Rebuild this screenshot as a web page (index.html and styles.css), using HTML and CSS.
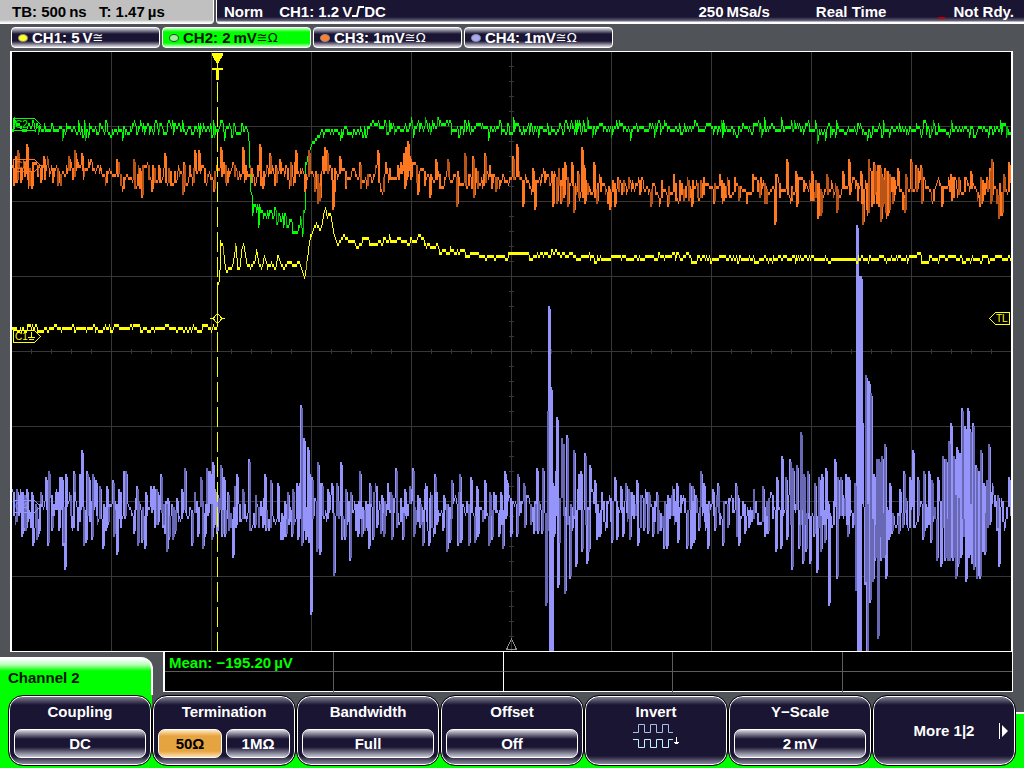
FILE: index.html
```html
<!DOCTYPE html>
<html lang="en">
<head>
  <meta charset="UTF-8">
  <meta name="viewport" content="width=device-width, initial-scale=1.0">
  <title>Oscilloscope</title>
  <link rel="stylesheet" href="styles.css">
</head>
<body>

  <!-- Status bar -->
  <header class="status">
    <div class="timebase">
      <span class="tb">TB: 500&#8201;ns</span>
      <span>T: 1.47&#8201;µs</span>
    </div>
    <div class="acquisition">
      <span class="mode">Norm</span>
      <span class="trigger">CH1: 1.2&#8201;V<svg class="edge" viewBox="0 0 12 11" width="12" height="11"><path d="M0 10h5l2-9h5" /></svg>DC</span>
      <span class="rate">250&#8201;MSa/s</span>
      <span class="sampling">Real Time</span>
      <span class="lamp"></span>
      <span>Not Rdy.</span>
    </div>
  </header>

  <!-- Channel buttons -->
  <nav class="channels">
    <button class="channel ch1"><span class="dot"></span>CH1: 5&#8201;V<span class="sym">≅</span></button>
    <button class="channel ch2 active"><span class="dot"></span>CH2: 2&#8201;mV<span class="sym">≅Ω</span></button>
    <button class="channel ch3"><span class="dot"></span>CH3: 1mV<span class="sym">≅Ω</span></button>
    <button class="channel ch4"><span class="dot"></span>CH4: 1mV<span class="sym">≅Ω</span></button>
  </nav>

  <!-- Waveforms -->
  <main class="screen">
    <svg class="plot" viewBox="12 52 999 599" preserveAspectRatio="none">
      <path id="grid" class="grid" />
      <path class="center" d="M511.500 639L506.500 649.500H516.500Z" />
      <g class="c2"><path id="wave2" /><path id="wave2dim" class="dim" /></g>
      <g class="c3"><path id="wave3" /><path id="wave3dim" class="dim" /></g>
      <g class="c4"><path id="wave4" /><path id="wave4dim" class="dim" /></g>
      <path class="trigger-line" d="M217.500 82V651" />
      <g class="c1"><path id="wave1" /><path id="wave1dim" class="dim" /></g>
      <g class="c1">
        <path d="M212 53h11v2l-5 9v4h5v2h-4v10h-3v-10h-4v-2h5v-4l-5-9z" />
        <path class="line" d="M210 318.500h3l4.500-5 4.500 5-4.500 5-4.500-5M222 318.500h3" />
        <path class="line" d="M1009.500 312.500V324.500H995.500L989.500 318.500L995.500 312.500Z" />
        <text x="996" y="322">TL</text>
        <path class="line" d="M13.500 330.500H34.500L40.500 336.500L34.500 342.500H13.500ZM31.500 332v5M28 337.500h7M29 339.500h5" />
        <text x="15" y="340">C1</text>
      </g>
      <g class="c2">
        <path class="line" d="M13.500 118.500H34.500L40.500 124.500L34.500 130.500H13.500Z" />
        <text x="15" y="128">C2</text>
      </g>
      <g class="c3">
        <path class="line" d="M13.500 159.500H34.500L40.500 165.500L34.500 171.500H13.500Z" />
        <text x="15" y="169">C3</text>
      </g>
      <g class="c4">
        <path class="line" d="M13.500 500.500H34.500L40.500 506.500L34.500 512.500H13.500Z" />
        <text x="15" y="510">C4</text>
      </g>
    </svg>
  </main>

  <!-- Measurement results -->
  <div class="results">
    <div class="tab">Channel 2</div>
    <div class="measure">
      <table>
        <tr><td colspan="1"><span class="reading">Mean: −195.20&#8201;µV</span></td><td></td><td></td><td></td><td></td></tr>
        <tr><td></td><td></td><td></td><td></td><td></td></tr>
      </table>
    </div>
  </div>

  <!-- Soft keys -->
  <footer class="menu">
    <div class="softkey">
      <span id="coupling">Coupling</span>
      <div class="values"><button class="value" aria-describedby="coupling">DC</button></div>
    </div>
    <div class="softkey">
      <span id="termination">Termination</span>
      <div class="values">
        <button class="value selected" aria-describedby="termination">50Ω</button>
        <button class="value" aria-describedby="termination">1MΩ</button>
      </div>
    </div>
    <div class="softkey">
      <span id="bandwidth">Bandwidth</span>
      <div class="values"><button class="value" aria-describedby="bandwidth">Full</button></div>
    </div>
    <div class="softkey">
      <span id="offset">Offset</span>
      <div class="values"><button class="value" aria-describedby="offset">Off</button></div>
    </div>
    <button class="softkey">
      <span>Invert</span>
      <svg class="invert" viewBox="0 0 48 26" width="48" height="26">
        <path stroke="#a8c0e8" d="M1 9.500H6.500V1.500H12.500V9.500H18.500V1.500H24.500V9.500H30.500V1.500H36.500V9.500H41" />
        <path stroke="#c0f4ff" d="M1 16.500H6.500V24.500H12.500V16.500H18.500V24.500H24.500V16.500H30.500V24.500H36.500V16.500H41" />
        <path stroke="#fff" d="M44.500 14V21M42 19.500h5M43 20.500h3" />
      </svg>
    </button>
    <div class="softkey">
      <span id="yscale">Y−Scale</span>
      <div class="values"><button class="value" aria-describedby="yscale">2&#8201;mV</button></div>
    </div>
    <button class="softkey more">
      <span>More 1|2</span>
      <svg class="next" viewBox="0 0 10 16" width="10" height="16"><path d="M0 0h1v16h-1zM3 2l6 6-6 6z" /></svg>
    </button>
  </footer>

  <script src="plot.js"></script>
</body>
</html>
```
FILE: styles.css
```css
/* Global Styles */
* {
  box-sizing: border-box;
}

body {
  font-family: "Liberation Sans", Arial, sans-serif;
  font-size: 15px;
  font-weight: bold;
  line-height: 18px;
  color: #fff;
  background-color: #505458;
  margin: 0;
  height: 100vh;
  min-height: 500px;
  display: flex;
  flex-direction: column;
}

button {
  font: inherit;
  color: inherit;
  padding: 0;
  cursor: pointer;
}

/* Status bar */
.status {
  display: flex;
  gap: 2px;
  height: 24px;
  white-space: nowrap;
}

.timebase {
  width: 214px;
  padding: 3px 12px;
  color: #000;
  background: linear-gradient(#c0c0c0 20px, #fff 23px);
  border-right: 1px solid #fff;
  border-bottom-right-radius: 4px;
}

.tb {
  margin-right: 8px;
}

.acquisition {
  flex: 1;
  display: flex;
  padding: 3px 10px 0 7px;
  background: linear-gradient(#1a1533 17px, #6b6880 21px, #fff 22px);
  border-left: 1px solid #fff;
  border-bottom-left-radius: 4px;
}

.mode {
  margin-right: 16px;
}

.edge path {
  fill: none;
  stroke: #fff;
  stroke-width: 2;
}

.rate {
  margin-left: auto;
  margin-right: 46px;
}

.sampling {
  margin-right: 52px;
}

.lamp {
  width: 7px;
  height: 16px;
  margin-right: 8px;
  border-bottom: 2px solid #c00000;
}

/* Channel buttons */
.channels {
  display: flex;
  gap: 2px;
  padding: 3px 11px;
}

.channel {
  display: flex;
  align-items: center;
  width: 149px;
  height: 21px;
  padding: 0 6px;
  border: 1px solid #fff;
  border-radius: 4px;
  background: linear-gradient(#d8d8e0, #1a1533 6px, #1a1533 13px, #e0e0e8);
}

.channel.active {
  color: #001400;
  background: linear-gradient(#c8ffc8, #00ff00 4px, #00ff00 15px, #c8ffc8);
}

.dot {
  width: 10px;
  height: 8px;
  margin-right: 4px;
  border-radius: 50%;
  border: 1px solid #888;
}

.ch1 .dot { background-color: #ffff20; }
.ch2 .dot { background-color: #a0f0a0; border-color: #205020; }
.ch3 .dot { background-color: #ff8030; }
.ch4 .dot { background-color: #a8a8ff; }

.sym {
  font-family: "DejaVu Sans", sans-serif;
  font-weight: normal;
  font-size: 13px;
}

/* Waveforms */
.screen {
  flex: 1;
  min-height: 0;
  margin: 0 11px 0 10px;
  border: 1px solid #fff;
  border-width: 1px 2px;
  background-color: #000;
}

.plot {
  display: block;
  width: 100%;
  height: 100%;
  shape-rendering: crispEdges;
}

.grid {
  fill: none;
  stroke: #373737;
}

.center {
  fill: none;
  stroke: #909090;
}

.trigger-line {
  stroke: #ffff00;
  stroke-dasharray: 20 5;
}

.c1 { fill: #ffff00; stroke: #ffff00; }
.c2 { fill: #00ff00; stroke: #00ff00; }
.c3 { fill: #ff7820; stroke: #ff7820; }
.c4 { fill: #9494fa; stroke: #9494fa; }
.c1 .dim { fill: #b4b400; }
.c2 .dim { fill: #00b800; }
.c3 .dim { fill: #b85418; }
.c4 .dim { fill: #6868b4; }

.plot g path,
.plot text {
  stroke: none;
}

.plot g .line {
  fill: none;
  stroke: inherit;
}

.plot text {
  font-size: 10px;
  font-weight: normal;
}

/* Measurement results */
.results {
  display: flex;
  gap: 10px;
  padding-right: 11px;
}

.tab {
  width: 153px;
  margin-top: 5px;
  padding: 12px 8px 0;
  color: #001400;
  background: linear-gradient(#fff 2px, #b0ffb0 8px, #00ff00 14px);
  border-right: 2px solid #fff;
  border-top-right-radius: 12px;
}

.measure {
  flex: 1;
  height: 40px;
  margin-bottom: 3px;
  background-color: #000;
  border: 2px solid #fff;
  border-width: 0 1px 1px 2px;
}

.measure table {
  width: 100%;
  table-layout: fixed;
  border-spacing: 0;
}

.measure td {
  height: 20px;
  padding: 2px 4px 0;
  line-height: 17px;
  white-space: nowrap;
  color: #00ff00;
  border-right: 1px solid #5c5c5c;
}

.measure tr:first-child td {
  border-bottom: 1px solid #5c5c5c;
}

.measure td:nth-child(2) {
  border-right-color: #fff;
}

.measure td:last-child {
  border-right: 0;
}

/* Soft keys */
.menu {
  display: flex;
  height: 73px;
  padding: 0 8px 2px;
  background:
    linear-gradient(#00ff00, #00ff00) left / 152px 100% no-repeat,
    linear-gradient(#505458 17px, #fff 17px, #fff 19px, #00ff00 19px) right / 8px 100% no-repeat,
    linear-gradient(#505458 59px, #00ff00 59px);
}

.softkey {
  flex: 1;
  display: flex;
  flex-direction: column;
  align-items: center;
  padding: 7px 4px 6px;
  position: relative;
  border: 1px solid #000;
  border-radius: 15px;
  box-shadow: inset 0 0 0 1px #fff;
  background: linear-gradient(#8c8a9c, #1a1533 9px, #1a1533 60px, #9c9aac);
}

.values {
  display: flex;
  gap: 4px;
  width: 100%;
  margin-top: 8px;
  padding: 0 1px;
}

.value {
  flex: 1;
  height: 29px;
  border: 1px solid #fff;
  border-radius: 7px;
  background: linear-gradient(#d8d8e0, #1a1533 9px, #1a1533 17px, #c8c8d4);
}

.value.selected {
  color: #000;
  background: linear-gradient(#ffe8c0, #e6a440 6px, #e6a440 21px, #ffe0b0);
}

.invert {
  margin-top: 2px;
  fill: none;
}

.more {
  justify-content: center;
}

.next {
  position: absolute;
  right: 6px;
  top: 27px;
  fill: #fff;
}
```
FILE: plot.js
```js
const LEFT = 12, RIGHT = 1011, BOTTOM = 651;

// small seeded generator, so the noise is the same on every load
let seed = 7;
function rnd() {
  seed = (seed * 16807) % 2147483647;
  return seed / 2147483647;
}

function pairs(text) {
  return text.trim().split(/\s+/).map(p => p.split(',').map(Number));
}

function level(knots, x) {
  for (let i = 1; i < knots.length; i++) {
    const [x0, y0] = knots[i - 1], [x1, y1] = knots[i];
    if (x <= x1) return y0 + (y1 - y0) * (x - x0) / ((x1 - x0) || 1);
  }
  return knots[knots.length - 1][1];
}

// one column per pixel, each column joins the last sample to the new one
function draw(id, sample, dimRate, wide) {
  let bright = '', dim = '', prev = null;
  for (let x = LEFT; x < RIGHT; x++) {
    const y = Math.round(sample(x, prev) / 3) * 3;
    const from = prev === null ? y : prev;
    // overlap ends a step short so flat parts stay thin
    const top = from < y ? from + (y - from > 3 ? 3 : y - from) : y;
    const end = from > y ? Math.max(y + 3, from) : y + 3;
    const w = wide && end - top > 9 ? 2 : 1;
    const bar = `M${x} ${top}h${w}V${Math.min(end, BOTTOM)}h-${w}z`;
    if (end - top > 6 && rnd() < dimRate) dim += bar;
    else bright += bar;
    prev = y;
  }
  document.getElementById(id).setAttribute('d', bright);
  document.getElementById(id + 'dim').setAttribute('d', dim);
}

// peaks on top of random noise around a slowly changing level
function noisy(knots, amp, peaks, hold) {
  const map = new Map(peaks);
  return (x, prev) => {
    if (map.has(x)) return map.get(x);
    if (prev !== null && !map.has(x - 1) && rnd() < hold(x)) return prev;
    return level(knots, x) + (rnd() + rnd() - 1) * amp(x);
  };
}

// Grid
let grid = '';
for (let x = 111.5; x < RIGHT; x += 100) grid += `M${x} 52V651`;
for (let y = 126.5; y < BOTTOM; y += 75) grid += `M12 ${y}H1011`;
for (let x = 31.5; x < RIGHT; x += 20) grid += `M${x} 349v5`;
for (let y = 66.5; y < BOTTOM; y += 15) grid += `M509 ${y}h5`;
document.getElementById('grid').setAttribute('d', grid);

// Channel 1
const ch1 = pairs(`12,327 216,327 217,285 218,282 219,270 220,241 222,243 224,262 226,270
  232,265 235,244 237,266 239,268 241,250 243,242 246,262 250,266 254,260 256,248 258,262
  261,267 264,254 267,266 271,262 275,267 277,254 281,263 284,267 288,260 293,264 299,261
  302,269 304,276 306,262 308,245 310,235 313,228 316,223 320,229 323,213 325,208 327,215
  330,213 332,225 334,235 337,242 340,241 343,233 347,238 352,241 358,244 363,237 367,239
  372,243 378,239 395,239 413,240 417,234 421,236 426,245 435,245 441,252 452,249 458,250
  466,253 490,254 505,256 512,251 520,252 530,256 540,251 555,252 570,253 580,256 660,256
  672,255 700,257 1011,257`);
draw('wave1', noisy(ch1, x => x > 215 && x < 350 ? 0 : 4, [], x => x > 215 && x < 350 ? 0 : 0.5), 0.3);

// Channel 2
const ch2 = pairs(`12,127 246,127 248,138 249,165 250,185 252,207 265,215 285,222 302,230
  304,196 305,165 308,150 315,138 320,131 340,131 360,129 380,125 410,125 500,127 1011,128`);
const ch2Peaks = pairs(`14,118 62,137 78,121 85,137 106,120 122,138 172,121 224,138 255,204
  258,225 302,235 389,120 411,117 413,135 488,137 513,118 587,118 630,138 664,120 764,118
  781,118 817,141 825,138 867,137 883,120`);
draw('wave2', noisy(ch2, x => x > 250 && x < 303 ? 14 : x > 303 && x < 340 ? 3 : 9, ch2Peaks, () => 0.3), 0.3);

// Channel 3
const ch3 = pairs(`12,170 110,170 140,176 200,172 300,170 360,175 450,177 500,178 560,183
  610,189 700,188 760,188 860,187 960,187 1011,187`);
const ch3Peaks = pairs(`13,182 17,151 26,145 28,187 31,187 47,155 57,184 60,184 74,151 81,152
  88,159 105,183 116,160 122,190 133,160 141,196 147,163 151,190 164,154 167,184 182,192
  194,151 198,151 206,184 213,189 220,148 242,148 244,180 259,145 262,186 269,154 279,160
  289,187 295,151 304,190 308,151 314,190 317,200 319,198 322,155 324,148 326,150 332,207
  333,192 339,157 345,187 360,187 377,151 382,192 403,154 405,148 407,140 409,155 417,192
  429,196 435,160 447,160 456,204 464,154 472,157 473,196 484,154 489,164 491,187 495,188
  512,157 516,145 522,204 532,169 534,207 543,169 552,204 554,170 556,200 558,169 560,201
  562,168 564,163 567,205 571,163 573,210 577,172 579,199 581,148 583,166 584,201 593,163
  596,201 599,175 607,202 609,207 614,205 624,181 632,181 638,178 650,204 659,204 661,181
  667,204 673,175 687,178 691,204 703,178 713,201 719,175 722,202 734,178 738,199 746,200
  758,181 764,201 766,200 774,223 786,160 790,202 795,172 796,205 811,172 817,216 820,213
  826,175 836,211 842,172 848,160 857,198 860,170 862,223 865,180 867,213 868,160 871,205
  873,163 875,170 876,202 877,166 878,205 879,166 880,220 881,175 882,205 883,180 884,169
  885,210 886,217 887,170 888,210 890,175 892,200 897,169 902,208 904,211 910,160 915,166
  917,168 920,166 922,180 932,202 938,178 941,205 950,175 957,195 970,172 979,204 981,202
  989,168 991,160 996,200 998,217 1001,213 1003,175 1008,163 1010,172`);
draw('wave3', noisy(ch3, x => x > 858 && x < 890 ? 24 : 15, ch3Peaks, () => 0.4), 0.3, true);

// Channel 4
const ch4Peaks = pairs(`16,490 20,490 21,535 25,527 31,493 32,543 36,537 38,532 40,493 45,478
  47,544 48,472 56,490 58,529 59,478 61,478 62,544 64,568 65,475 72,529 73,472 77,529 79,475
  81,451 83,543 85,541 86,472 88,478 91,538 92,475 95,481 97,523 99,487 102,546 105,528
  106,487 112,481 113,533 116,553 120,526 123,472 125,472 133,532 135,499 137,543 141,541
  144,546 145,493 150,487 153,487 157,523 160,475 164,532 166,549 168,538 172,538 179,516
  181,490 184,469 191,543 195,497 197,534 200,478 202,546 204,534 206,469 209,472 211,538
  212,463 214,490 216,532 220,466 221,535 223,478 224,534 229,529 232,556 234,487 235,526
  236,475 242,490 246,520 248,460 252,526 258,526 262,526 264,475 270,481 277,484 280,538
  282,538 285,534 287,493 291,535 292,490 296,484 297,537 299,484 300,406 301,544 303,439
  305,538 307,448 308,540 309,475 310,612 311,478 316,550 317,463 318,481 319,553 321,484
  326,519 327,490 331,484 333,573 336,484 340,463 341,538 344,538 345,490 349,559 350,493
  355,529 357,535 359,472 361,535 368,547 369,484 372,538 375,484 380,532 387,484 391,538
  395,469 402,538 404,490 409,487 412,469 413,535 422,544 425,484 428,544 433,535 434,475
  446,550 449,541 451,481 457,544 459,475 460,541 468,544 470,478 474,541 476,487 477,535
  484,481 488,544 491,537 498,535 500,493 502,547 504,472 506,481 510,535 516,535 517,475
  523,484 524,526 533,532 536,469 537,532 541,532 542,469 545,604 547,412 548,307 549,651
  550,388 551,651 552,484 553,535 555,472 556,418 557,586 558,543 561,439 562,441 564,592
  566,436 569,577 573,451 575,565 578,475 580,472 581,550 584,454 586,562 588,550 589,466
  594,481 596,538 599,535 601,493 605,529 609,496 611,541 614,478 616,538 620,487 622,535
  625,484 628,490 629,538 636,481 637,544 643,529 645,490 648,493 652,535 657,532 663,547
  664,502 666,547 672,487 676,484 677,541 681,496 686,547 689,484 690,547 692,487 693,541
  695,496 700,472 703,484 707,547 712,490 714,529 717,484 722,544 731,496 735,484 736,535
  738,544 743,502 744,532 753,490 757,523 762,487 764,535 767,531 775,550 776,478 780,547
  781,457 785,478 786,537 789,460 791,568 792,469 796,466 798,547 800,433 802,562 803,475
  805,550 807,472 809,562 813,535 814,484 816,571 818,478 820,550 821,475 824,541 825,469
  828,604 834,460 836,577 837,478 840,478 845,475 847,535 848,478 854,484 855,588 856,226
  857,651 858,277 859,651 860,277 861,421 862,500 864,583 865,376 866,651 868,382 869,601
  870,394 872,580 873,475 874,559 876,460 877,637 878,460 880,559 881,457 883,556 884,445
  885,577 888,537 889,484 891,532 896,525 899,490 902,526 903,472 908,529 909,478 912,451
  916,523 917,478 922,538 923,472 926,523 928,472 930,541 931,481 936,559 937,478 940,565
  942,457 944,559 945,460 947,559 948,442 949,559 950,424 952,559 953,457 955,577 956,448
  957,565 959,454 960,556 961,409 964,427 965,580 967,409 968,556 969,430 971,562 972,424
  973,568 975,466 976,577 978,472 979,577 980,451 982,550 983,484 984,553 986,481 987,526
  988,445 992,484 996,529 998,565 999,508 1004,529 1008,478 1010,514`);
draw('wave4', noisy([[12, 509], [1011, 511]], x => x > 930 && x < 990 ? 40 : 24, ch4Peaks, () => 0.3), 0.3, true);
```
